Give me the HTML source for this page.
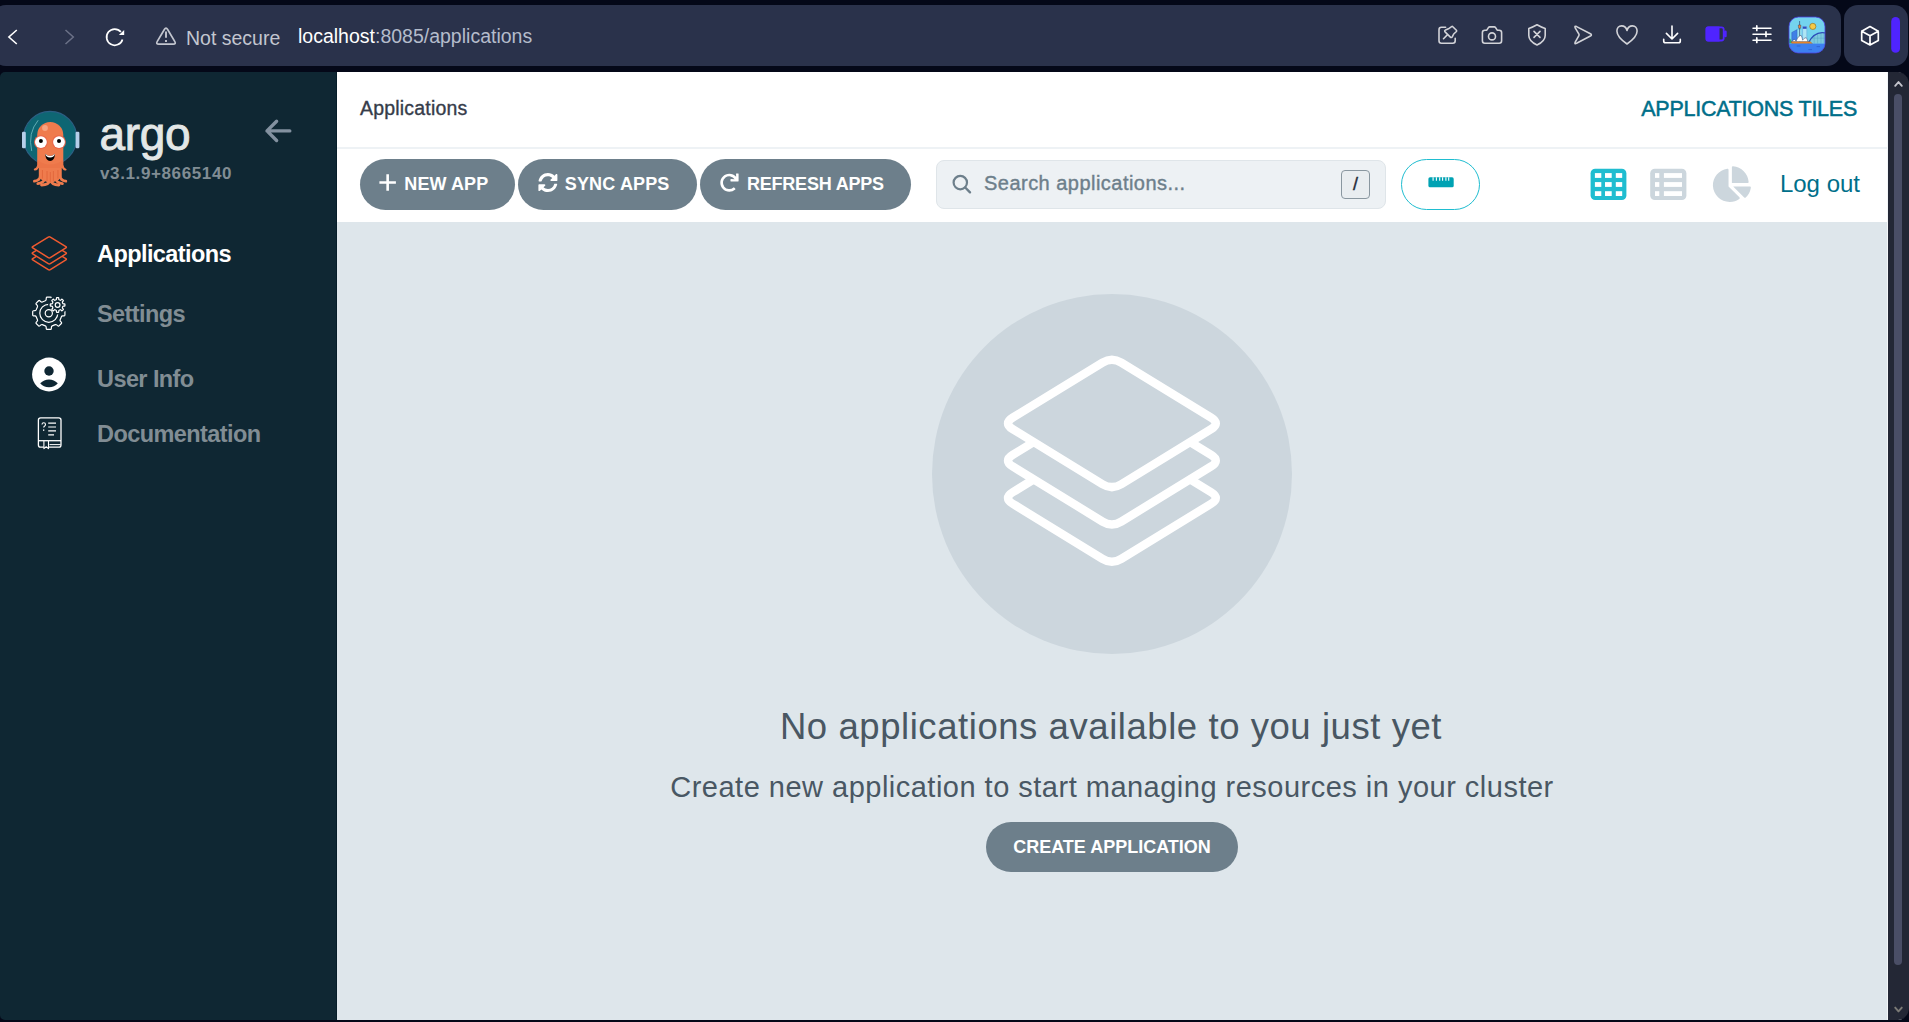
<!DOCTYPE html>
<html lang="en">
<head>
<meta charset="utf-8">
<title>Applications Tiles - Argo CD</title>
<style>
*{box-sizing:border-box;margin:0;padding:0}
html,body{width:1909px;height:1022px;overflow:hidden;background:#040818;font-family:"Liberation Sans",sans-serif}
.abs{position:absolute}
#chrome{position:absolute;left:0;top:0;width:1909px;height:72px;background:#040818}
#bar1{position:absolute;left:-8px;top:5px;width:1849px;height:61px;border-radius:14px;background:#2a324b}
#bar2{position:absolute;left:1844px;top:5px;width:64px;height:61px;border-radius:14px;background:#2a324b}
#page{position:absolute;left:0;top:72px;width:1909px;height:948px;background:#040818;overflow:hidden}
#sidebar{position:absolute;left:0;top:0;width:337px;height:948px;background:#0f2733;border-right:1px solid #061d29;border-radius:5px 0 0 5px}
#main{position:absolute;left:337px;top:0;width:1550px;height:948px;background:#dee6eb}
#hdr{position:absolute;left:0;top:0;width:1550px;height:75px;background:#fff}
#hdrline{position:absolute;left:0;top:75px;width:1550px;height:2px;background:#eef2f5}
#tools{position:absolute;left:0;top:77px;width:1550px;height:73px;background:#fff}
#scroll{position:absolute;left:1887px;top:0;width:22px;height:948px;background:#232735;border-radius:0 12px 12px 0;box-shadow:inset 1px 0 0 #f3f6f8}
#thumb{position:absolute;left:7px;top:22px;width:8px;height:871px;border-radius:4px;background:#4a4e66}
.btn{position:absolute;height:51px;border-radius:26px;background:#6d7f8b;color:#fff;font-weight:bold;font-size:18px;line-height:51px;white-space:pre}
.nav{position:absolute;left:97px;font-weight:bold;font-size:23.5px;line-height:28px;color:#818d94;white-space:pre;letter-spacing:-0.58px}
</style>
</head>
<body>
<div id="chrome">
  <div id="bar1"></div>
  <div id="bar2"></div>
  <div class="abs" id="notsecure" style="left:186px;top:25px;font-size:19.5px;line-height:26px;color:#c3c6d0;white-space:pre">Not secure</div>
  <div class="abs" id="url" style="left:298px;top:23px;font-size:19.5px;line-height:26px;color:#b4bccb;white-space:pre"><span style="color:#fff">localhost</span>:8085/applications</div>
</div>
<div id="page">
  <div id="sidebar">
    <div class="abs" id="argo" style="left:99.5px;top:34px;font-size:46px;line-height:56px;font-weight:normal;color:#e3e7e7;-webkit-text-stroke:.9px #e3e7e7;white-space:pre;letter-spacing:-.3px">argo</div>
    <div class="abs" id="ver" style="left:100px;top:92px;font-size:17px;line-height:20px;font-weight:bold;color:#818d94;white-space:pre;letter-spacing:.62px">v3.1.9+8665140</div>
    <div class="nav" id="nav1" style="top:168px;color:#fff">Applications</div>
    <div class="nav" id="nav2" style="top:228px">Settings</div>
    <div class="nav" id="nav3" style="top:293px">User Info</div>
    <div class="nav" id="nav4" style="top:348px">Documentation</div>
  </div>
  <div id="main">
    <div id="hdr">
      <div class="abs" id="crumb" style="left:23px;top:24px;font-size:19.5px;line-height:24px;color:#363c4a;-webkit-text-stroke:.35px #363c4a;letter-spacing:.2px;white-space:pre">Applications</div>
      <div class="abs" id="tiles" style="right:30px;top:22.7px;font-size:21.5px;line-height:28px;color:#006f8a;-webkit-text-stroke:.5px #006f8a;letter-spacing:-.25px;white-space:pre">APPLICATIONS TILES</div>
    </div>
    <div id="hdrline"></div>
    <div id="tools">
      <div class="btn" id="b1" style="left:23px;width:155px;top:10px"><span style="margin-left:44.3px;letter-spacing:.1px">NEW APP</span></div>
      <div class="btn" id="b2" style="left:181px;width:179px;top:10px"><span style="margin-left:46.8px;letter-spacing:.15px">SYNC APPS</span></div>
      <div class="btn" id="b3" style="left:363px;width:211px;top:10px"><span style="margin-left:46.9px;letter-spacing:-.2px">REFRESH APPS</span></div>
      <div class="abs" id="search" style="left:599px;top:11px;width:450px;height:49px;border-radius:8px;background:#edf1f4;border:1px solid #dfe5e9"></div>
      <div class="abs" id="sph" style="left:647px;top:20.7px;font-size:20px;line-height:26px;color:#6d7f8b;-webkit-text-stroke:.4px #6d7f8b;letter-spacing:.47px;white-space:pre">Search applications...</div>
      <div class="abs" id="slash" style="left:1004px;top:21px;width:29px;height:29px;border:1px solid #8a97a0;border-radius:4px;background:#e9edf0;color:#1f2b3a;font-size:18px;line-height:27px;text-align:center;-webkit-text-stroke:.4px #1f2b3a">/</div>
      <div class="abs" id="pill" style="left:1064px;top:10px;width:79px;height:51px;border-radius:26px;border:1.6px solid #1fbdd0;background:#fff"></div>
      <div class="abs" id="logout" style="right:27px;top:18.9px;font-size:24px;line-height:32px;color:#006f8a;white-space:pre">Log out</div>
    </div>
    <div class="abs" id="circle" style="left:595px;top:222px;width:360px;height:360px;border-radius:50%;background:#ccd6dd"></div>
    <div class="abs" id="h4" style="left:-1px;width:1550px;top:632px;text-align:center;font-size:36.5px;line-height:46px;color:#495763;letter-spacing:.56px;white-space:pre">No applications available to you just yet</div>
    <div class="abs" id="h5" style="left:0;width:1550px;top:697px;text-align:center;font-size:29px;line-height:36px;color:#495763;letter-spacing:.49px;white-space:pre">Create new application to start managing resources in your cluster</div>
    <div class="btn" id="create" style="left:649px;width:252px;top:749.5px;height:50.5px;line-height:50px;text-align:center">CREATE APPLICATION</div>
  </div>
  <div id="scroll"><div id="thumb"></div></div>
</div>
<svg id="icons" width="1909" height="1022" viewBox="0 0 1909 1022" style="position:absolute;left:0;top:0;pointer-events:none">
<!--ICONS-->
<g fill="#ccd6dd" stroke="#fff" stroke-width="8.4" stroke-linejoin="round">
<path d="M1102.52 437.15 Q1111.90 431.40 1121.28 437.15 L1211.12 492.25 Q1220.50 498.00 1211.12 503.75 L1121.28 558.85 Q1111.90 564.60 1102.52 558.85 L1012.68 503.75 Q1003.30 498.00 1012.68 492.25Z"/>
<path d="M1102.52 399.85 Q1111.90 394.10 1121.28 399.85 L1211.12 454.95 Q1220.50 460.70 1211.12 466.45 L1121.28 521.55 Q1111.90 527.30 1102.52 521.55 L1012.68 466.45 Q1003.30 460.70 1012.68 454.95Z"/>
<path d="M1102.52 362.55 Q1111.90 356.80 1121.28 362.55 L1211.12 417.65 Q1220.50 423.40 1211.12 429.15 L1121.28 484.25 Q1111.90 490.00 1102.52 484.25 L1012.68 429.15 Q1003.30 423.40 1012.68 417.65Z"/>
</g>
<g fill="#0f2733" stroke="#f05a30" stroke-width="1.5" stroke-linejoin="round">
<path d="M48.28 249.03 Q49.30 248.40 50.32 249.03 L65.88 258.67 Q66.90 259.30 65.88 259.93 L50.32 269.57 Q49.30 270.20 48.28 269.57 L32.72 259.93 Q31.70 259.30 32.72 258.67Z"/>
<path d="M48.28 243.03 Q49.30 242.40 50.32 243.03 L65.88 252.67 Q66.90 253.30 65.88 253.93 L50.32 263.57 Q49.30 264.20 48.28 263.57 L32.72 253.93 Q31.70 253.30 32.72 252.67Z"/>
<path d="M48.28 237.03 Q49.30 236.40 50.32 237.03 L65.88 246.67 Q66.90 247.30 65.88 247.93 L50.32 257.57 Q49.30 258.20 48.28 257.57 L32.72 247.93 Q31.70 247.30 32.72 246.67Z"/>
</g>
<defs><mask id="gm" maskUnits="userSpaceOnUse" x="20" y="290" width="60" height="50"><rect x="20" y="290" width="60" height="50" fill="#fff"/><circle cx="57.6" cy="305" r="9.6" fill="#000"/></mask></defs>
<g fill="none" stroke="#fff" stroke-width="1.2" stroke-linejoin="round">
<g mask="url(#gm)"><path d="M61.42 309.88 Q61.73 310.62 62.52 310.67 L64.11 310.77 Q64.91 310.81 64.91 311.61 L64.91 314.99 Q64.91 315.79 64.11 315.83 L62.52 315.93 Q61.73 315.98 61.42 316.72 L60.14 319.81 Q59.83 320.55 60.36 321.15 L61.42 322.33 Q61.95 322.93 61.38 323.50 L59.00 325.88 Q58.43 326.45 57.83 325.92 L56.65 324.86 Q56.05 324.33 55.31 324.64 L52.22 325.92 Q51.48 326.23 51.43 327.02 L51.33 328.61 Q51.29 329.41 50.49 329.41 L47.11 329.41 Q46.31 329.41 46.27 328.61 L46.17 327.02 Q46.12 326.23 45.38 325.92 L42.29 324.64 Q41.55 324.33 40.95 324.86 L39.77 325.92 Q39.17 326.45 38.60 325.88 L36.22 323.50 Q35.65 322.93 36.18 322.33 L37.24 321.15 Q37.77 320.55 37.46 319.81 L36.18 316.72 Q35.87 315.98 35.08 315.93 L33.49 315.83 Q32.69 315.79 32.69 314.99 L32.69 311.61 Q32.69 310.81 33.49 310.77 L35.08 310.67 Q35.87 310.62 36.18 309.88 L37.46 306.79 Q37.77 306.05 37.24 305.45 L36.18 304.27 Q35.65 303.67 36.22 303.10 L38.60 300.72 Q39.17 300.15 39.77 300.68 L40.95 301.74 Q41.55 302.27 42.29 301.96 L45.38 300.68 Q46.12 300.37 46.17 299.58 L46.27 297.99 Q46.31 297.19 47.11 297.19 L50.49 297.19 Q51.29 297.19 51.33 297.99 L51.43 299.58 Q51.48 300.37 52.22 300.68 L55.31 301.96 Q56.05 302.27 56.65 301.74 L57.83 300.68 Q58.43 300.15 59.00 300.72 L61.38 303.10 Q61.95 303.67 61.42 304.27 L60.36 305.45 Q59.83 306.05 60.14 306.79Z"/><circle cx="48.8" cy="313.3" r="9"/></g>
<circle cx="48.8" cy="313.3" r="3.6"/>
<path d="M62.82 303.45 Q62.97 303.82 63.37 303.83 L64.52 303.87 Q64.92 303.89 64.92 304.29 L64.92 305.71 Q64.92 306.11 64.52 306.13 L63.37 306.17 Q62.97 306.18 62.82 306.55 L62.39 307.60 Q62.23 307.97 62.51 308.26 L63.29 309.09 Q63.56 309.38 63.28 309.67 L62.27 310.68 Q61.98 310.96 61.69 310.69 L60.86 309.91 Q60.57 309.63 60.20 309.79 L59.15 310.22 Q58.78 310.37 58.77 310.77 L58.73 311.92 Q58.71 312.32 58.31 312.32 L56.89 312.32 Q56.49 312.32 56.47 311.92 L56.43 310.77 Q56.42 310.37 56.05 310.22 L55.00 309.79 Q54.63 309.63 54.34 309.91 L53.51 310.69 Q53.22 310.96 52.93 310.68 L51.92 309.67 Q51.64 309.38 51.91 309.09 L52.69 308.26 Q52.97 307.97 52.81 307.60 L52.38 306.55 Q52.23 306.18 51.83 306.17 L50.68 306.13 Q50.28 306.11 50.28 305.71 L50.28 304.29 Q50.28 303.89 50.68 303.87 L51.83 303.83 Q52.23 303.82 52.38 303.45 L52.81 302.40 Q52.97 302.03 52.69 301.74 L51.91 300.91 Q51.64 300.62 51.92 300.33 L52.93 299.32 Q53.22 299.04 53.51 299.31 L54.34 300.09 Q54.63 300.37 55.00 300.21 L56.05 299.78 Q56.42 299.63 56.43 299.23 L56.47 298.08 Q56.49 297.68 56.89 297.68 L58.31 297.68 Q58.71 297.68 58.73 298.08 L58.77 299.23 Q58.78 299.63 59.15 299.78 L60.20 300.21 Q60.57 300.37 60.86 300.09 L61.69 299.31 Q61.98 299.04 62.27 299.32 L63.28 300.33 Q63.56 300.62 63.29 300.91 L62.51 301.74 Q62.23 302.03 62.39 302.40Z"/><circle cx="57.6" cy="305" r="2.4"/>
</g>
<!-- chrome icons -->
<g fill="none" stroke-linecap="round" stroke-linejoin="round">
<path d="M16.8 30 L8.9 37 L16.8 44" stroke="#fff" stroke-width="1.6" stroke-linecap="butt" stroke-linejoin="miter"/>
<path d="M65.5 30 L73.3 37 L65.5 44" stroke="#6b7187" stroke-width="1.5" stroke-linecap="butt" stroke-linejoin="miter"/>
<path d="M120.9 31.9 A8.1 8.1 0 1 0 122.5 39.4" stroke="#fff" stroke-width="1.7" stroke-linecap="butt"/>
<path d="M124.2 30 V35.1 H118.9 Z" fill="#fff" stroke="none"/>
<g stroke="#c3c6cf" stroke-width="1.7">
<path d="M164.37 29.45 Q166.00 26.70 167.63 29.45 L174.72 41.40 Q176.35 44.15 173.15 44.15 L158.85 44.15 Q155.65 44.15 157.28 41.40Z"/>
<path d="M166 31.6 V37.8" stroke-linecap="butt" stroke-width="1.9"/><path d="M166 40 V41.9" stroke-linecap="butt" stroke-width="1.9"/>
</g>
<g stroke="#d2d3d8" stroke-width="1.6">
<!-- pin -->
<path d="M1445.6 27.3 H1441.4 Q1439 27.3 1439 29.7 V40.8 Q1439 43.2 1441.4 43.2 H1452.8 Q1455.2 43.2 1455.2 40.8 V38.2"/>
<path d="M1443.5 38.7 L1447.3 34.9"/>
<path fill="#2a324b" d="M1451.6 26.7 Q1452.2 26.1 1452.8 26.7 L1456.4 30.3 Q1457 30.9 1456.4 31.5 L1453.7 34 L1452.4 36.7 Q1451.5 38.3 1450.1 36.9 L1445.3 32.1 Q1443.9 30.7 1445.6 29.9 L1448.4 28.8 Z"/>
<!-- camera -->
<path d="M1484.8 30.2 H1486.8 L1488.4 27.6 Q1488.9 26.9 1489.8 26.9 H1494.2 Q1495.1 26.9 1495.6 27.6 L1497.2 30.2 H1499.2 Q1501.6 30.2 1501.6 32.6 V40.8 Q1501.6 43.2 1499.2 43.2 H1484.8 Q1482.4 43.2 1482.4 40.8 V32.6 Q1482.4 30.2 1484.8 30.2 Z"/>
<circle cx="1492" cy="36.4" r="3.5"/>
<!-- shield -->
<path d="M1537 24.7 Q1533 27 1528.8 28.4 V35.4 Q1528.8 41 1537 45 Q1545.2 41 1545.2 35.4 V28.4 Q1541 27 1537 24.7 Z"/>
<path d="M1534 31.4 L1540 37.4 M1540 31.4 L1534 37.4"/>
<!-- send -->
<path d="M1576.6 26.6 Q1574.2 25.5 1575.2 27.9 L1578.9 34.2 Q1579.3 34.9 1578.9 35.6 L1575.2 42.1 Q1574.2 44.4 1576.6 43.3 L1590.4 36 Q1592.4 34.9 1590.4 33.8 Z"/>
<!-- heart -->
<path d="M1627 30.4 C1626 27 1623.5 25.9 1621.6 25.9 C1618.8 25.9 1616.9 28.2 1616.9 31 C1616.9 36.5 1622 40.5 1627 44 C1632 40.5 1637.1 36.5 1637.1 31 C1637.1 28.2 1635.2 25.9 1632.4 25.9 C1630.5 25.9 1628 27 1627 30.4 Z"/>
</g>
<g stroke="#fff" stroke-width="1.6">
<!-- download -->
<path d="M1672 26 V38.4 M1666.4 33.4 L1672 39 L1677.6 33.4"/>
<path d="M1663.7 39.2 V41 Q1663.7 42.8 1665.5 42.8 H1678.5 Q1680.3 42.8 1680.3 41 V39.2"/>
<!-- sliders -->
<path d="M1753 28.2 H1771 M1753 34.2 H1771 M1753 40.2 H1771" stroke-width="1.5"/>
<path d="M1756.8 25.9 V30.5 M1766 31.9 V36.5 M1756.8 37.9 V42.5" stroke-width="1.7"/>
<!-- cube -->
<path d="M1870 26.6 L1878.3 31.2 V40.4 L1870 45 L1861.7 40.4 V31.2 Z M1861.7 31.2 L1870 35.8 L1878.3 31.2 M1870 35.8 V45" stroke-width="1.7"/>
</g>
<!-- battery -->
<rect x="1706.5" y="27.3" width="17.2" height="13.2" rx="2.2" stroke="#4f24ff" stroke-width="1.8"/>
<path d="M1707.6 26.4 H1719.5 V41.4 H1707.6 Q1705.6 41.4 1705.6 39.4 V28.4 Q1705.6 26.4 1707.6 26.4 Z" fill="#4f24ff"/>
<rect x="1724" y="30.6" width="2.7" height="6.6" rx="1.2" fill="#4f24ff"/>
<rect x="1891.2" y="17" width="8.8" height="35.8" rx="4.4" fill="#4f24ff"/>
<!-- scrollbar arrows -->
<path d="M1895.2 85.8 L1898.5 82 L1901.8 85.8" stroke="#c3c3cb" stroke-width="1.9"/>
<path d="M1895.2 1007.6 L1898.5 1011.4 L1901.8 1007.6" stroke="#7b7a76" stroke-width="1.9"/>
</g>
<!-- avatar -->
<defs><clipPath id="avc"><rect x="1789" y="17" width="36" height="36" rx="9.5"/></clipPath></defs>
<g clip-path="url(#avc)">
<rect x="1789" y="17" width="36" height="36" fill="#74d4ee"/>
<circle cx="1812.8" cy="26.4" r="3.1" fill="#f6c945" stroke="#8a6a1a" stroke-width=".6"/>
<path d="M1808.2 43.5 Q1814.5 30.5 1826 33.2 V43.5 Z" fill="#7cc9de"/>
<path d="M1811.5 38.2 H1826 M1814.2 35.4 V43.5 M1817.6 33.4 V43.5 M1821 32.8 V43.5 M1824 33 V43.5" stroke="#4fa3c4" stroke-width=".45" fill="none"/>
<path d="M1808 43.6 Q1814.5 30.4 1826 33.2" fill="none" stroke="#2d4db8" stroke-width="1.2"/>
<path d="M1791.8 43 V32.4 L1797.2 29.6 V43 Z" fill="#3f80e6" stroke="#2a4fae" stroke-width=".4"/>
<path d="M1797.6 43 V30 H1801.4 V43 Z" fill="#9adff1"/>
<path d="M1799.6 21 V43" stroke="#26345e" stroke-width=".6"/>
<path d="M1798.3 25 H1800.9 L1800.6 28.3 H1798.6 Z" fill="#f08a3c" stroke="#26345e" stroke-width=".4"/>
<path d="M1802.6 43 V26.6 H1806.8 V43 Z" fill="#aee6f4" stroke="#5a8fd8" stroke-width=".4"/>
<rect x="1802.8" y="26.6" width="3.8" height="2.2" fill="#2d4fc0"/>
<path d="M1789 43.6 V38.4 Q1791.4 38.2 1791.6 43.6 Z" fill="#2bb673"/>
<path d="M1791.4 41.8 L1794.2 39.4 L1796.2 41 Q1797.6 36.2 1801 35.2 Q1802.4 38 1802.6 40.2 Q1804.2 37.8 1806.2 37.6 Q1807.4 39.6 1808 41.8 Z" fill="#fff" stroke="#26345e" stroke-width=".45" stroke-linejoin="round"/>
<path d="M1791 41.8 H1810.4 L1812.6 43.8 H1792 Z" fill="#f08a2c" stroke="#9a4a10" stroke-width=".35"/>
<rect x="1789" y="43.6" width="36" height="9.6" fill="#3d80f0"/>
<path d="M1796.8 46 H1800.4 M1808.4 49.6 H1812 M1816.6 46.6 H1820" stroke="#2450c0" stroke-width=".55" fill="none"/>
</g>
<rect x="1789" y="17" width="36" height="36" rx="9.5" fill="none" stroke="#4a3fe0" stroke-width=".8"/>

<!-- argo logo -->
<g>
<circle cx="50.1" cy="138" r="26.6" fill="#0e6673" stroke="#2c5f84" stroke-width="1.2"/>
<rect x="22" y="131.8" width="3.8" height="16.4" rx="1.2" fill="#b6cfea"/>
<rect x="75.6" y="131.8" width="3.8" height="16.4" rx="1.2" fill="#b6cfea"/>
<path d="M37.9 120.6 Q27.6 133 31.6 150.6" fill="none" stroke="#6fb9c0" stroke-width="1" stroke-linecap="round" opacity=".85"/>
<!-- tentacles -->
<g fill="none" stroke="#ef7b4d" stroke-linecap="round">
<path d="M40.3 164 V176 Q40 180.4 34.4 181.2" stroke-width="2.8"/>
<path d="M44.6 164 V178.6 Q44 183 37.8 183.6" stroke-width="2.8"/>
<path d="M49.4 164 V181 Q48.8 184.8 41.6 185" stroke-width="3"/>
<path d="M51.2 164 V181 Q51.8 184.8 58.8 185" stroke-width="3"/>
<path d="M55.8 164 V178.6 Q56.4 183 62.4 183.6" stroke-width="2.8"/>
<path d="M60.1 164 V176 Q60.4 180.4 65.8 181.2" stroke-width="2.8"/>
<path d="M38 166 Q37.6 169 34.8 169.6" stroke-width="2"/>
<path d="M62.6 166 Q63 169 65.6 169.6" stroke-width="2"/>
</g>
<path d="M38.9 164 H61.5 V177 Q59 180.5 55.8 181 L51.2 183 H49.4 L44.6 181 Q41.4 180.5 38.9 177 Z" fill="#ef7b4d"/>
<path d="M42.45 170 V178.6 M47 171 V181 M50.3 172 V182.4 M53.4 171 V181 M57.95 170 V178.6" stroke="#d8572f" stroke-width=".6" fill="none" opacity=".9"/>
<!-- body -->
<path d="M37.2 168 V135 A13.05 13.05 0 0 1 63.3 135 V168 Z" fill="#ef7b4d"/>
<path d="M37.2 160 Q50 169 63.3 160 V168 H37.2 Z" fill="#e9693f" opacity=".35"/>
<circle cx="45" cy="128" r="2.9" fill="#f6a481"/>
<!-- eyes -->
<circle cx="40.9" cy="142.1" r="6.9" fill="#e9654b"/><circle cx="59" cy="142.1" r="6.9" fill="#e9654b"/>
<circle cx="40.9" cy="142.1" r="5.9" fill="#fff"/><circle cx="59" cy="142.1" r="5.9" fill="#fff"/>
<circle cx="40.9" cy="141" r="2" fill="#010101"/><circle cx="59" cy="141" r="2" fill="#010101"/>
<!-- mouth -->
<path d="M45.2 153.8 Q50.1 158.4 55 153.8 Q54.6 161 50.1 161 Q45.6 161 45.2 153.8 Z" fill="#010101"/>
<path d="M45.2 153.8 Q50.1 158.4 55 153.8 Q54.2 157.2 50.1 157.6 Q46 157.2 45.2 153.8 Z" fill="#fff"/>
</g>
<!-- collapse arrow -->
<path d="M289.8 130.9 H267 M276.6 121.3 L267 130.9 L276.6 140.5" fill="none" stroke="#8391a0" stroke-width="3.4" stroke-linecap="round" stroke-linejoin="round"/>
<!-- user icon (material account_circle) -->
<circle cx="49" cy="374.5" r="16.9" fill="#fff"/>
<circle cx="49" cy="371" r="4.7" fill="#0f2733"/>
<path d="M40.2 383.2 Q44 379.4 49 379.4 Q54 379.4 57.8 383.2 Q54.6 387.2 49 387.2 Q43.4 387.2 40.2 383.2 Z" fill="#0f2733"/>
<!-- book icon -->
<g fill="none" stroke="#fff" stroke-width="1.3" stroke-linejoin="round">
<path d="M43.8 447.2 H40.6 Q38.4 447.2 38.4 445 V420.1 Q38.4 417.9 40.6 417.9 H58.8 Q61 417.9 61 420.1 V445 Q61 447.2 58.8 447.2 H48.6"/>
<path d="M38.4 440.7 H61"/>
<path d="M49.5 444.6 H60.6" stroke-width="1"/>
<path d="M43.9 441 V448.6 L46.2 446.8 L48.5 448.6 V441" stroke-width="1.1"/>
<path d="M48.2 423.2 H56 M48.2 427 H56 M48.2 430.8 H56 M48.2 434.8 H54" stroke-width="1.2"/>
<path d="M42 424.6 Q42 422.8 43.7 422.8 Q45.5 422.8 45.5 424.5 Q45.5 425.6 44.4 426.2 Q43.7 426.7 43.7 427.6" stroke-width="1.1"/>
<path d="M43.7 430 V430.2" stroke-width="1.4" stroke-linecap="round"/>
</g>

<!-- main toolbar icons -->
<path d="M379.4 182.5 H395.9 M387.65 174.3 V190.7" stroke="#fff" stroke-width="2.6" fill="none"/>
<g transform="translate(538.1 172.8) scale(0.0383)"><path fill="#fff" d="M370.72 133.28C339.458 104.008 298.888 87.962 255.848 88c-77.458.068-144.328 53.178-162.791 126.85-1.344 5.363-6.122 9.15-11.651 9.15H24.103c-7.498 0-13.194-6.807-11.807-14.176C33.933 94.924 134.813 8 256 8c66.448 0 126.791 26.136 171.315 68.685L463.030 40.970C478.149 25.851 504 36.559 504 57.941V192c0 13.255-10.745 24-24 24H345.941c-21.382 0-32.090-25.851-16.971-40.971l41.750-41.749zM32 296h134.059c21.382 0 32.090 25.851 16.971 40.971l-41.750 41.750c31.262 29.273 71.835 45.319 114.876 45.280 77.418-.070 144.315-53.144 162.787-126.849 1.344-5.363 6.122-9.150 11.651-9.150h57.304c7.498 0 13.194 6.807 11.807 14.176C478.067 417.076 377.187 504 256 504c-66.448 0-126.791-26.136-171.315-68.685L48.970 471.030C33.851 486.149 8 475.441 8 454.059V320c0-13.255 10.745-24 24-24z"/></g>
<!-- refresh -->
<g transform="translate(720 173.4) scale(0.0363)"><path fill="#fff" d="M500.33 0h-47.41a12 12 0 0 0-12 12.570l4 82.760A247.420 247.420 0 0 0 256 8C119.340 8 7.900 119.530 8 256.190 8.100 393.070 119.100 504 256 504a247.100 247.100 0 0 0 166.180-63.910 12 12 0 0 0 .480-17.430l-34-34a12 12 0 0 0-16.380-.550A176 176 0 1 1 402.100 157.800l-101.530-4.870a12 12 0 0 0-12.570 12v47.410a12 12 0 0 0 12 12h200.330a12 12 0 0 0 12-12V12a12 12 0 0 0-12-12z"/></g>
<!-- search -->
<circle cx="960.3" cy="182.6" r="6.7" fill="none" stroke="#6d7f8b" stroke-width="2.2"/>
<path d="M965.2 187.5 L970 192.3" stroke="#6d7f8b" stroke-width="2.4" stroke-linecap="round"/>
<!-- ruler -->
<rect x="1428.4" y="177.3" width="25.3" height="10" rx="1.6" fill="#00a2b3"/>
<path d="M1433.1 177.3 V180.8 M1436.4 177.3 V180.8 M1439.7 177.3 V180.8 M1442.6 177.3 V180.8 M1445.9 177.3 V180.8 M1448.7 177.3 V180.8" stroke="#fff" stroke-width="1.1"/>
<!-- grid -->
<rect x="1590.6" y="168.7" width="35.8" height="31.4" rx="4.6" fill="#1fbdd0"/>
<g fill="#fff">
<rect x="1594.9" y="173.1" width="6.4" height="4.8"/><rect x="1605" y="173.1" width="6.7" height="4.8"/><rect x="1615.8" y="173.1" width="6.4" height="4.8"/>
<rect x="1594.9" y="182.1" width="6.4" height="4.8"/><rect x="1605" y="182.1" width="6.7" height="4.8"/><rect x="1615.8" y="182.1" width="6.4" height="4.8"/>
<rect x="1594.9" y="191.2" width="6.4" height="4.8"/><rect x="1605" y="191.2" width="6.7" height="4.8"/><rect x="1615.8" y="191.2" width="6.4" height="4.8"/>
</g>
<!-- list -->
<rect x="1650.2" y="168.7" width="36.2" height="31.4" rx="4.6" fill="#ccd6dd"/>
<g fill="#fff">
<rect x="1655" y="173.1" width="4.3" height="4.8"/><rect x="1663.9" y="173.1" width="18.1" height="4.8"/>
<rect x="1655" y="182.1" width="4.3" height="4.8"/><rect x="1663.9" y="182.1" width="18.1" height="4.8"/>
<rect x="1655" y="191.2" width="4.3" height="4.8"/><rect x="1663.9" y="191.2" width="18.1" height="4.8"/>
</g>
<!-- pie -->
<g transform="translate(1712.9 166.3) scale(0.0698)"><path fill="#ccd6dd" d="M527.79 288H290.5l158.03 158.03c6.04 6.04 15.98 6.53 22.19.68 38.7-36.46 65.32-85.61 73.13-140.86 1.34-9.46-6.51-17.85-16.06-17.85zm-15.83-64.8C503.72 103.74 408.26 8.28 288.8.04 279.68-.59 272 7.1 272 16.24V240h223.77c9.14 0 16.82-7.68 16.19-16.8zM224 288V50.71c0-9.55-8.39-17.4-17.84-16.06C86.99 51.49-4.1 155.6.14 280.37 4.5 408.51 114.83 513.59 243.03 511.98c50.4-.63 96.97-16.87 135.26-44.03 7.9-5.6 8.42-17.23 1.57-24.08L224 288z"/></g>

<!--/ICONS-->
</svg>
</body>
</html>
